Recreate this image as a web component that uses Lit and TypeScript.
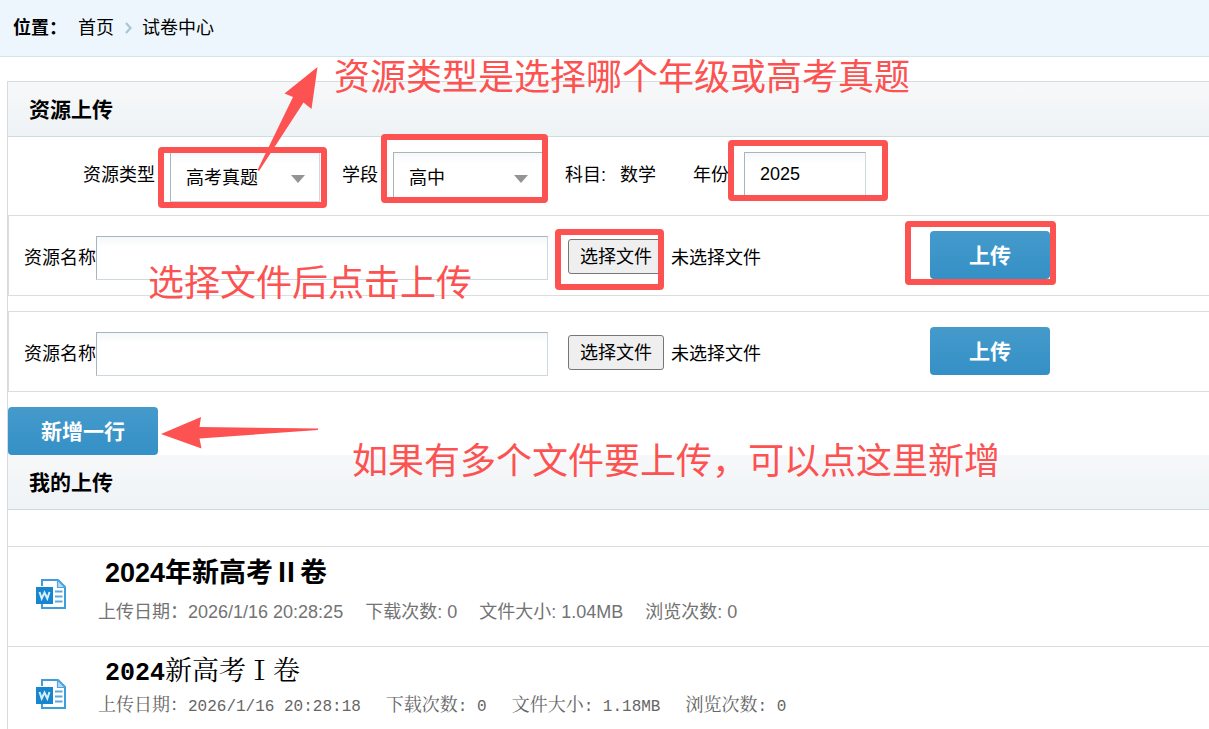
import { LitElement, html, css, svg } from "lit";
import { customElement, property, state } from "lit/decorators.js";

interface Paper {
  title: string;
  date: string;
  downloads: number;
  size: string;
  views: number;
  mono?: boolean;
}

const controls = css`
  *, *::before, *::after { box-sizing: border-box; }
  input, select, button { font: inherit; color: #000; }
  .field {
    height: 44px;
    padding: 0 15px;
    border: 1px solid;
    border-color: #a7b5bc #ced9df #ced9df #a7b5bc;
    border-radius: 0;
    background: linear-gradient(#f5f7f9, #fff 10px);
    outline: none;
  }
  .primary {
    height: 48px;
    padding: 2px 0 0;
    border: 0;
    border-radius: 4px;
    background: linear-gradient(#459acb, #3490c6);
    color: #fff;
    font-size: 21px;
    font-weight: 700;
    cursor: pointer;
  }
`;

@customElement("upload-row")
export class UploadRow extends LitElement {
  @property({ type: Number }) index = 0;
  @state() private fileName = "未选择文件";

  static styles = [
    controls,
    css`
      :host { display: block; }
      .row {
        display: flex;
        align-items: flex-start;
        padding: 15px;
        height: 81px;
        border: 1px solid #dcdddd;
        border-right: 0;
      }
      .group { display: flex; align-items: center; width: 906px; padding-top: 5px; }
      .label { flex: none; }
      .name { width: 452px; margin-right: 20px; }
      .pick {
        width: 96px;
        height: 35px;
        margin: 0 7px 4px 0;
        padding: 2px 0 0;
        border: 1px solid #767676;
        border-radius: 3px;
        background: #efefef;
      }
      .upload { width: 120px; }
    `,
  ];

  private pick() {
    this.renderRoot.querySelector<HTMLInputElement>("input[type=file]")?.click();
  }

  private picked(e: Event) {
    this.fileName = (e.target as HTMLInputElement).files?.[0]?.name ?? "未选择文件";
  }

  render() {
    const id = `name-${this.index}`;
    return html`
      <div class="row">
        <div class="group">
          <label class="label" for=${id}>资源名称</label>
          <input class="field name" id=${id} type="text" />
          <button class="pick" type="button" @click=${this.pick}>选择文件</button>
          <input type="file" hidden @change=${this.picked} />
          <span>${this.fileName}</span>
        </div>
        <button class="primary upload" type="button">上传</button>
      </div>
    `;
  }
}

@customElement("paper-item")
export class PaperItem extends LitElement {
  @property({ attribute: false }) paper!: Paper;

  static styles = css`
    *, *::before, *::after { box-sizing: border-box; }
    :host { display: block; }
    .item {
      display: flex;
      height: 100px;
      padding-left: 28px;
      border-top: 1px solid #dcdddd;
    }
    .icon { flex: none; width: 30px; height: 30px; margin: 32px 32px 0 0; }
    .title { margin: 0; padding: 6px 0 0 7px; font-size: 27px; line-height: 40px; }
    .title a { color: #000; text-decoration: none; }
    .meta {
      display: flex;
      gap: 22px;
      margin: 0;
      padding-top: 5px;
      line-height: 28px;
      color: #737373;
      white-space: pre;
    }
    .mono {
      font-family: "Liberation Mono", "Noto Serif CJK SC", "Noto Sans CJK SC", monospace;
    }
    .mono .title { font-weight: 400; }
    .mono .title b { font-size: 25px; }
    .mono .meta { gap: 25px; padding-top: 0; margin-top: -2px; color: #666; }
    .mono .value { font-size: 16px; }
  `;

  render() {
    const p = this.paper;
    const m = /^(\d+)(.*)$/.exec(p.title)!;
    return html`
      <article class="item">
        <svg class="icon" viewBox="0 0 30 30" aria-hidden="true">
          <path d="M6 7V1H22L29 8v21H6v-5" fill="#fff" stroke="#3f9ddb" stroke-width="2" />
          <path d="M21.500 1V8.500h7.500z" fill="#b8dcf3" stroke="#4fa5dd" stroke-width="1.200" />
          <path d="M19 12.500h7.500M19 17.500h7.500M19 22.500h7.500" stroke="#5aaade" stroke-width="2" />
          <path d="M0 8h17V25H0z" fill="#1686d0" />
          <path d="M3.500 13l2.200 6.500L8.500 13.500l2.800 6L13.500 13" fill="none" stroke="#d9eefb" stroke-width="2" />
        </svg>
        <div class=${p.mono ? "mono" : "plain"}>
          <h3 class="title"><a href="#">${p.mono ? html`<b>${m[1]}</b>${m[2]}` : p.title}</a></h3>
          <p class="meta"><span>上传日期：<span class="value">${p.date}</span></span><span>下载次数<span class="value">: ${p.downloads}</span></span><span>文件大小<span class="value">: ${p.size}</span></span><span>浏览次数<span class="value">: ${p.views}</span></span></p>
        </div>
      </article>
    `;
  }
}

@customElement("app-root")
export class AppRoot extends LitElement {
  @state() private rows = [1, 2];

  private papers: Paper[] = [
    { title: "2024年新高考Ⅱ卷", date: "2026/1/16 20:28:25", downloads: 0, size: "1.04MB", views: 0 },
    { title: "2024新高考Ⅰ卷", date: "2026/1/16 20:28:18", downloads: 0, size: "1.18MB", views: 0, mono: true },
  ];

  static styles = [
    controls,
    css`
      :host {
        display: block;
        position: relative;
        height: 100vh;
        overflow: hidden;
        background: #fff;
        color: #000;
        font: 18px/26px "Liberation Sans", "Noto Sans CJK SC", sans-serif;
      }
      .crumbs {
        display: flex;
        align-items: center;
        height: 57px;
        padding: 0 13px;
        background: #edf6fc;
        border-bottom: 1px solid #d3e3ea;
      }
      .crumbs b { width: 65px; }
      .crumbs a { color: #000; text-decoration: none; }
      .chevron { width: 8px; height: 12px; margin: 0 10px; }
      .panel { margin: 24px 0 0 7px; border: 1px solid #d5dbdf; border-width: 1px 0 0 1px; }
      .heading {
        margin: 0;
        height: 55px;
        padding-left: 21px;
        border-bottom: 1px solid #cfdbdf;
        background: linear-gradient(#f7f8f9, #eef3f6);
        font-size: 21px;
        line-height: 56px;
      }
      .filters { display: flex; align-items: flex-start; padding: 15px 0 13px 75px; }
      .filters label { line-height: 46px; margin-right: 15px; }
      .filters .text { line-height: 46px; margin-right: 14px; }
      .select { display: grid; width: 150px; margin-right: 22px; }
      .select select, .select svg { grid-area: 1 / 1; }
      .select select { appearance: none; height: 50px; padding-top: 2px; }
      .select svg { width: 14px; height: 8px; place-self: center end; margin: 4px 15px 0 0; pointer-events: none; }
      .subject { margin-right: 23px; }
      .year { width: 122px; }
      .rows { display: grid; gap: 15px; }
      .add { display: block; width: 150px; margin-top: 15px; }
      .list { padding-top: 36px; }
      .marks {
        position: absolute;
        left: 0;
        top: 0;
        width: 1100px;
        height: 460px;
        pointer-events: none;
      }
      .note {
        position: absolute;
        margin: 0;
        color: #fc5251;
        font-size: 36px;
        line-height: 52px;
        white-space: nowrap;
        pointer-events: none;
      }
      .note-type { left: 334px; top: 52px; }
      .note-file { left: 148px; top: 258px; }
      .note-add { left: 352px; top: 436px; }
    `,
  ];

  private marks = [
    [161, 150, 163, 55],
    [384, 137, 161, 63],
    [731, 143, 154, 55],
    [558, 232, 103, 55],
    [908, 224, 145, 58],
  ];

  private caret() {
    return html`<svg viewBox="0 0 14 8" aria-hidden="true"><path d="M0 0h14L7 8z" fill="#949494" /></svg>`;
  }

  render() {
    return html`
      <nav class="crumbs" aria-label="位置">
        <b>位置：</b>
        <a href="#">首页</a>
        <svg class="chevron" viewBox="0 0 8 12" aria-hidden="true">
          <path d="M2 1l4.500 5L2 11" fill="none" stroke="#a9c6d2" stroke-width="2.200" />
        </svg>
        <a href="#">试卷中心</a>
      </nav>
      <main class="panel">
        <h2 class="heading">资源上传</h2>
        <div class="filters">
          <label for="type">资源类型</label>
          <div class="select">
            <select class="field" id="type"><option>高考真题</option></select>
            ${this.caret()}
          </div>
          <label for="stage">学段</label>
          <div class="select">
            <select class="field" id="stage"><option>高中</option></select>
            ${this.caret()}
          </div>
          <span class="text">科目:</span>
          <span class="text"><span class="subject">数学</span></span>
          <label for="year">年份</label>
          <input class="field year" id="year" type="text" value="2025" />
        </div>
        <div class="rows">
          ${this.rows.map((n) => html`<upload-row .index=${n}></upload-row>`)}
        </div>
        <button class="primary add" type="button" @click=${() => (this.rows = [...this.rows, this.rows.length + 1])}>
          新增一行
        </button>
        <h2 class="heading">我的上传</h2>
        <div class="list">
          ${this.papers.map((p) => html`<paper-item .paper=${p}></paper-item>`)}
        </div>
      </main>
      <svg class="marks" viewBox="0 0 1100 460" aria-hidden="true">
        ${this.marks.map(
          ([x, y, w, h]) => svg`<rect x=${x} y=${y} width=${w} height=${h} rx="1" fill="none" stroke="#fc5251" stroke-width="6" />`
        )}
        <path d="M317.500 67L311.500 109L303.500 102.500L259 171L257.500 170L293 97L284.500 93.500z" fill="#fc5251" />
        <path d="M161 434L201 417L199.500 427L318 428.500V430L199.500 438.500L201.500 448.500z" fill="#fc5251" />
      </svg>
      <p class="note note-type">资源类型是选择哪个年级或高考真题</p>
      <p class="note note-file">选择文件后点击上传</p>
      <p class="note note-add">如果有多个文件要上传，可以点这里新增</p>
    `;
  }
}
